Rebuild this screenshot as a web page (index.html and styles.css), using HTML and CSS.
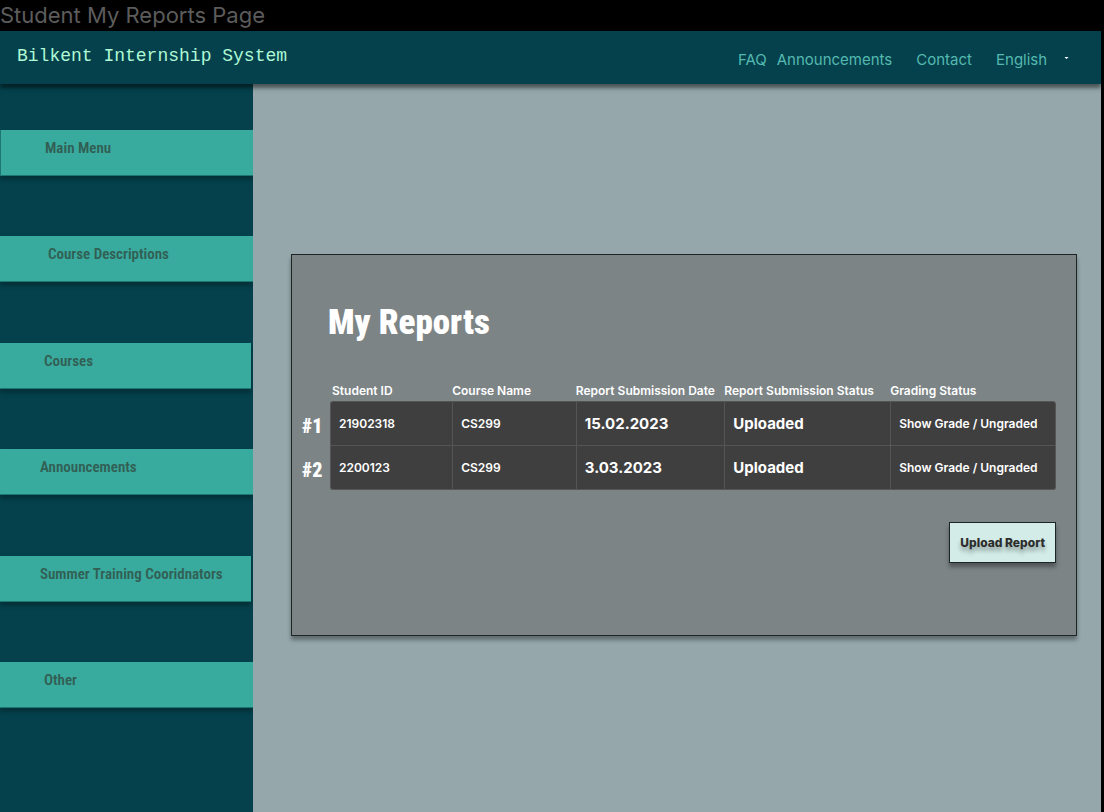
FILE: index.html
```html
<!DOCTYPE html>
<html lang="en">
<head>
<meta charset="utf-8">
<title>Student My Reports Page</title>
<link rel="stylesheet" href="styles.css">
</head>
<body>
<div class="frame-title">Student My Reports Page</div>
<div class="app">
  <header class="topbar">
    <a class="brand" href="#">Bilkent Internship System</a>
    <nav class="topnav" aria-label="Site">
      <a class="topnav-link" href="#">FAQ</a>
      <a class="topnav-link topnav-news" href="#">Announcements</a>
      <a class="topnav-link" href="#">Contact</a>
      <div class="language">
        <select class="language-select" aria-label="Language">
          <option>English</option>
        </select>
        <svg class="caret" viewBox="0 0 6 4" aria-hidden="true"><path d="M0.5 0.8h5L3 3.3z" fill="#fff"/></svg>
      </div>
    </nav>
  </header>
  <div class="body">
    <nav class="sidebar" aria-label="Main">
      <a class="menu-item outlined" href="#">Main Menu</a>
      <a class="menu-item indent-more" href="#">Course Descriptions</a>
      <a class="menu-item inset" href="#">Courses</a>
      <a class="menu-item indent-less" href="#">Announcements</a>
      <a class="menu-item indent-less inset" href="#">Summer Training Cooridnators</a>
      <a class="menu-item" href="#">Other</a>
    </nav>
    <main class="content">
      <section class="card">
        <h1 class="card-title">My Reports</h1>
        <table class="reports">
          <colgroup>
            <col class="col-no"><col class="col-id"><col class="col-course"><col class="col-date"><col class="col-status"><col class="col-grade">
          </colgroup>
          <thead>
            <tr>
              <td></td>
              <th scope="col">Student ID</th>
              <th scope="col">Course Name</th>
              <th scope="col">Report Submission Date</th>
              <th scope="col">Report Submission Status</th>
              <th scope="col">Grading Status</th>
            </tr>
          </thead>
          <tbody>
            <tr>
              <th scope="row">#1</th>
              <td>21902318</td>
              <td>CS299</td>
              <td class="large">15.02.2023</td>
              <td class="large">Uploaded</td>
              <td>Show Grade / Ungraded</td>
            </tr>
            <tr>
              <th scope="row">#2</th>
              <td>2200123</td>
              <td>CS299</td>
              <td class="large">3.03.2023</td>
              <td class="large">Uploaded</td>
              <td>Show Grade / Ungraded</td>
            </tr>
          </tbody>
        </table>
        <button class="upload" type="button">Upload Report</button>
      </section>
    </main>
  </div>
</div>
</body>
</html>
```
FILE: styles.css
```css
* {
  box-sizing: border-box;
}

body {
  margin: 0;
  min-height: 100vh;
  display: flex;
  flex-direction: column;
  background: #000;
  font-family: Inter, "Liberation Sans", sans-serif;
}

a {
  text-decoration: none;
}

.frame-title {
  height: 31px;
  color: #5c5c5c;
  font-size: 22px;
  line-height: 31px;
}

.app {
  flex: 1;
  display: flex;
  flex-direction: column;
  margin-right: 3px;
}

.topbar {
  position: relative;
  display: flex;
  justify-content: space-between;
  height: 53px;
  padding: 0 32px 0 17px;
  background: #04414c;
  box-shadow: 0 4px 4px rgba(0, 0, 0, 0.5);
}

.brand {
  color: #aff9d5;
  font-family: "Liberation Mono", monospace;
  font-size: 18px;
  line-height: 50px;
}

.topnav {
  display: flex;
  align-items: center;
  gap: 24px;
  padding-top: 4px;
}

.topnav-link,
.language-select {
  color: #54b9b0;
  font-size: 15px;
  font-weight: 400;
  line-height: 24px;
}

.topnav-news {
  margin-left: -14px;
}

.language {
  display: flex;
  align-items: center;
  gap: 16px;
}

.language-select {
  appearance: none;
  padding: 0;
  border: 0;
  background: transparent;
  font-family: inherit;
}

.caret {
  width: 5px;
  height: 4px;
  margin-bottom: 4px;
}

.body {
  flex: 1;
  display: flex;
}

.sidebar {
  flex: none;
  display: flex;
  flex-direction: column;
  justify-content: space-between;
  width: 253px;
  padding: 46px 0 104px;
  background: #04414c;
}

.menu-item {
  height: 46px;
  padding: 5px 0 0 44px;
  border-bottom: 1px solid #1c7770;
  background: #39aa9e;
  box-shadow: 0 4px 4px rgba(0, 0, 0, 0.25);
  color: #315f54;
  font-family: "Roboto Condensed", Roboto, "Liberation Sans", sans-serif;
  font-size: 15px;
  font-weight: 600;
  line-height: 26px;
  white-space: nowrap;
}

.outlined {
  border-left: 1px solid #1c7770;
}

.inset {
  margin-right: 2px;
}

.indent-more {
  padding-left: 48px;
}

.indent-less {
  padding-left: 40px;
}

.content {
  flex: 1;
  padding: 170px 24px 32px 38px;
  background: #95a7ab;
}

.card {
  display: flex;
  flex-direction: column;
  min-height: 382px;
  padding: 42px 20px 72px 10px;
  border: 1px solid #1c2425;
  background: #7c8486;
  box-shadow: 0 4px 4px rgba(0, 0, 0, 0.35);
}

.card-title {
  margin: 0 0 30px 26px;
  color: #fff;
  font-family: "Roboto Condensed", Roboto, "Liberation Sans", sans-serif;
  font-size: 35px;
  font-weight: 900;
  line-height: 52px;
}

.reports {
  width: 100%;
  table-layout: fixed;
  border-collapse: separate;
  border-spacing: 0;
  color: #fff;
  font-size: 12px;
  text-align: left;
  white-space: nowrap;
}

.col-no { width: 28px; }
.col-id { width: 16.2%; }
.col-course { width: 16.4%; }
.col-date { width: 19.7%; }
.col-status { width: 22%; }

.reports th,
.reports td {
  padding: 0;
  font-weight: 600;
}

.reports thead th {
  height: 22px;
  padding-top: 2px;
  line-height: 20px;
}

.reports thead th:nth-child(2) {
  padding-left: 2px;
}

.reports tbody th {
  padding-top: 4px;
  font-family: "Roboto Condensed", Roboto, "Liberation Sans", sans-serif;
  font-size: 20px;
  font-weight: 900;
}

.reports tbody td {
  height: 44px;
  padding-left: 8px;
  border: solid #555;
  border-width: 0 0 1px 1px;
  background: #3f3f3f;
}

.reports tbody tr:first-child td {
  height: 45px;
  border-top-width: 1px;
}

.reports tbody td:last-child {
  border-right-width: 1px;
}

.reports tbody tr:first-child td:nth-child(2) { border-top-left-radius: 3px; }
.reports tbody tr:first-child td:last-child { border-top-right-radius: 3px; }
.reports tbody tr:last-child td:nth-child(2) { border-bottom-left-radius: 3px; }
.reports tbody tr:last-child td:last-child { border-bottom-right-radius: 3px; }

.reports tbody .large {
  font-size: 15px;
  font-weight: 700;
}

.upload {
  align-self: flex-end;
  height: 41px;
  margin-top: 32px;
  padding: 0 10px;
  border: 1px solid #1c2425;
  background: #d3ece8;
  box-shadow: 0 4px 4px rgba(0, 0, 0, 0.35);
  color: #2c2c2c;
  font-family: inherit;
  font-size: 12px;
  font-weight: 800;
  text-shadow: 0 4px 4px rgba(0, 0, 0, 0.35);
}
```
